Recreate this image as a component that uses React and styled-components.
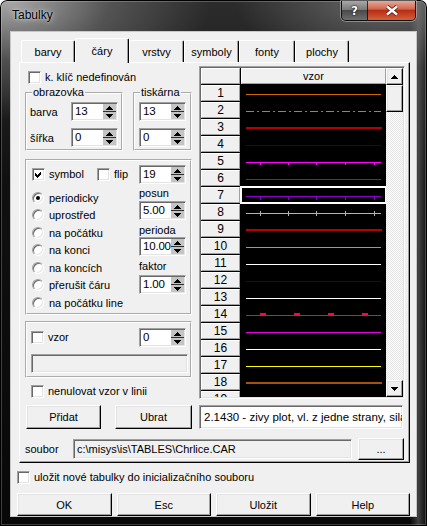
import React from "react";
import styled, { createGlobalStyle, css } from "styled-components";

const GlobalStyle = createGlobalStyle`
  html, body {
    margin: 0;
    padding: 0;
    background: #fff;
  }
  body {
    font-family: "Liberation Sans", Arial, sans-serif;
    font-size: 11px;
    color: #000;
  }
  * {
    box-sizing: border-box;
  }
`;

const raised = css`
  background: #f0f0f0;
  border: 1px solid;
  border-color: #fff #000 #000 #fff;
  box-shadow: inset -1px -1px 0 #a0a0a0, inset 1px 1px 0 #e3e3e3;
`;

const sunken = css`
  border: 1px solid;
  border-color: #a0a0a0 #fff #fff #a0a0a0;
  box-shadow: inset 1px 1px 0 #696969, inset -1px -1px 0 #e3e3e3;
`;

const TABS = [
  ["barvy", 54],
  ["čáry", 54],
  ["vrstvy", 55],
  ["symboly", 55],
  ["fonty", 56],
  ["plochy", 54],
];

const RADIOS = [
  "periodicky",
  "uprostřed",
  "na počátku",
  "na konci",
  "na koncích",
  "přerušit čáru",
  "na počátku line",
];

const TICKS = [19, 47, 75, 104, 133];

// one entry per row of the "vzor" column
const LINES = [
  { c: "#d06a00" },
  { c: "#c87a18", dash: "8 3 2 3" },
  { c: "#b40000", w: 2, x2: 141 },
  { c: "#0000b4" },
  { c: "#ff00ff", ticks: "short" },
  { c: "#a000a8" },
  { c: "#8800c8", ticks: "long" },
  { c: "#b4b4b4", ticks: "cross" },
  { c: "#b40000", w: 2, x2: 141 },
  { c: "#10d0d8" },
  { c: "#ffffff" },
  { c: "#0000b4" },
  { c: "#ffffff" },
  { c: "#ff0050", blocks: true },
  { c: "#e000e0" },
  { c: "#ffffff" },
  { c: "#ffff00" },
  { c: "#a85010", w: 2, x2: 141 },
  null,
];

const LineSample = ({ spec }) => {
  if (!spec) return null;
  const { c, w = 1, x2 = 140, dash, ticks, blocks } = spec;
  return (
    <svg width="145" height="16" shapeRendering="crispEdges">
      {dash ? (
        <line x1="5" x2={x2} y1="9.5" y2="9.5" stroke={c} strokeDasharray={dash} />
      ) : (
        <rect x="5" y={w === 2 ? 8 : 9} width={x2 - 5} height={w} fill={c} />
      )}
      {ticks &&
        TICKS.map((x) => (
          <rect
            key={x}
            x={x}
            y={ticks === "cross" ? 7 : 10}
            width="1"
            height={ticks === "cross" ? 5 : ticks === "long" ? 3 : 2}
            fill={c}
          />
        ))}
      {blocks &&
        [19, 53, 87, 121].map((x) => (
          <rect key={x} x={x} y="7" width="6" height="3" fill={c} />
        ))}
    </svg>
  );
};

const Arrow = ({ dir }) => (
  <svg width="7" height="4" shapeRendering="crispEdges">
    <polygon points={dir === "up" ? "0,4 3.5,0 7,4" : "0,0 3.5,4 7,0"} fill="#000" />
  </svg>
);

const SpinEdit = ({ value, w = 47 }) => (
  <SpinField $w={w}>
    <SpinValue>{value}</SpinValue>
    <SpinButtons>
      <SpinHalf>
        <Arrow dir="up" />
      </SpinHalf>
      <SpinHalf $lower>
        <Arrow dir="down" />
      </SpinHalf>
    </SpinButtons>
  </SpinField>
);

const Check = ({ label, checked }) => (
  <CheckItem>
    <CheckBox>
      {checked && (
        <svg width="9" height="9" viewBox="0 0 9 9" shapeRendering="crispEdges">
          <path d="M1 3 L3 5 L7 1 L7 4 L3 8 L1 6 Z" fill="#000" />
        </svg>
      )}
    </CheckBox>
    {label}
  </CheckItem>
);

const App = () => {
  return (
    <>
      <GlobalStyle />
      <Window>
        <TitleBar>
          <Caption>Tabulky</Caption>
          <CaptionButtons>
            <HelpButton>?</HelpButton>
            <CloseButton>
              <svg width="14" height="11" viewBox="0 0 14 11">
                <path d="M2 1.5 L12 9.5 M12 1.5 L2 9.5" stroke="#5a1408" strokeWidth="4" />
                <path d="M2 1.5 L12 9.5 M12 1.5 L2 9.5" stroke="#fff" strokeWidth="2.4" />
              </svg>
            </CloseButton>
          </CaptionButtons>
        </TitleBar>

        <Client>
          <TabStrip>
            {TABS.map(([name, w], i) => (
              <Tab key={name} $w={w} $active={i === 1}>
                {name}
              </Tab>
            ))}
          </TabStrip>

          <TabPage>
            <PageBody>
              <LeftColumn>
                <KeyRow>
                  <Check label="k. klíč nedefinován" />
                </KeyRow>

                <GroupsRow>
                  <Group $w={98}>
                    <GroupLegend>obrazovka</GroupLegend>
                    <FieldGrid $cols="41px 47px" $pl={3}>
                      <span>barva</span>
                      <SpinEdit value="13" />
                      <span>šířka</span>
                      <SpinEdit value="0" />
                    </FieldGrid>
                  </Group>
                  <Group $w={59}>
                    <GroupLegend>tiskárna</GroupLegend>
                    <FieldGrid $cols="47px" $pl={4}>
                      <SpinEdit value="13" />
                      <SpinEdit value="0" />
                    </FieldGrid>
                  </Group>
                </GroupsRow>

                <SymbolGroup>
                  <SymbolRow>
                    <CheckSlot>
                      <Check label="symbol" checked />
                    </CheckSlot>
                    <Check label="flip" />
                  </SymbolRow>
                  <SpinEdit value="19" />
                  <RadioList>
                    {RADIOS.map((r, i) => (
                      <RadioItem key={r}>
                        <Radio>{i === 0 && <RadioDot />}</Radio>
                        {r}
                      </RadioItem>
                    ))}
                  </RadioList>
                  <ParamStack>
                    <ParamLabel>posun</ParamLabel>
                    <SpinSlot $mt={1}>
                      <SpinEdit value="5.00" />
                    </SpinSlot>
                    <ParamLabel $mt={4}>perioda</ParamLabel>
                    <SpinEdit value="10.00" />
                    <ParamLabel $mt={4}>faktor</ParamLabel>
                    <SpinSlot $mt={2}>
                      <SpinEdit value="1.00" />
                    </SpinSlot>
                  </ParamStack>
                </SymbolGroup>

                <PatternGroup>
                  <PatternRow>
                    <Check label="vzor" />
                    <SpinEdit value="0" />
                  </PatternRow>
                  <DisabledField />
                </PatternGroup>

                <ResetRow>
                  <Check label="nenulovat vzor v linii" />
                </ResetRow>
              </LeftColumn>

              <LineGrid>
                <Table>
                  <FixedCell />
                  <HeadCell>vzor</HeadCell>
                  {LINES.map((spec, i) => (
                    <React.Fragment key={i}>
                      <FixedCell>{i + 1}</FixedCell>
                      <DataCell $active={i === 6}>
                        <LineSample spec={spec} />
                      </DataCell>
                    </React.Fragment>
                  ))}
                </Table>
                <ScrollBar>
                  <ScrollButton>
                    <Arrow dir="up" />
                  </ScrollButton>
                  <Thumb />
                  <Track />
                  <ScrollButton>
                    <Arrow dir="down" />
                  </ScrollButton>
                </ScrollBar>
              </LineGrid>
            </PageBody>

            <ActionRow>
              <Button $w={75}>Přidat</Button>
              <Button $w={77} $ml={14}>
                Ubrat
              </Button>
              <InfoField>2.1430 - zivy plot, vl. z jedne strany, sila</InfoField>
            </ActionRow>

            <FileRow>
              <FileLabel>soubor</FileLabel>
              <PathField>c:\misys\is\TABLES\Chrlice.CAR</PathField>
              <Button $w={46} $h={22} $ml={6}>
                ...
              </Button>
            </FileRow>
          </TabPage>

          <SaveRow>
            <Check label="uložit nové tabulky do inicializačního souboru" />
          </SaveRow>

          <DialogButtons>
            <Button $h={23}>OK</Button>
            <Button $h={23}>Esc</Button>
            <Button $h={23}>Uložit</Button>
            <Button $h={23}>Help</Button>
          </DialogButtons>
        </Client>
      </Window>
    </>
  );
};

export default App;

const Window = styled.div`
  width: 427px;
  height: 526px;
  display: flex;
  flex-direction: column;
  border-radius: 7px 7px 0 0;
  overflow: hidden;
  background:
    radial-gradient(ellipse 200px 120px at 10px 0px, rgba(175, 175, 175, 0.95), rgba(110, 110, 110, 0.6) 50%, rgba(60, 60, 60, 0) 100%),
    radial-gradient(ellipse 150px 70px at 385px 0px, rgba(130, 130, 130, 0.7), rgba(0, 0, 0, 0) 100%),
    linear-gradient(90deg, rgba(0, 0, 0, 0) 96%, rgba(120, 120, 120, 0.5) 98%, rgba(0, 0, 0, 0) 100%),
    linear-gradient(180deg, #2c2c2c 0%, #101010 35%, #080808 100%);
  box-shadow: inset 0 0 0 1px #000, inset 0 0 0 2px rgba(255, 255, 255, 0.22);
`;

const TitleBar = styled.div`
  height: 31px;
  flex: none;
  display: flex;
  align-items: flex-start;
  padding-left: 12px;
`;

const Caption = styled.div`
  padding-top: 8px;
  font-size: 12px;
  line-height: 15px;
  color: #000;
  text-shadow: 0 0 6px rgba(255, 255, 255, 0.8), 0 0 2px rgba(255, 255, 255, 0.6);
`;

const CaptionButtons = styled.div`
  margin-left: auto;
  margin-right: 11px;
  margin-top: 1px;
  height: 20px;
  display: flex;
  border-radius: 0 0 5px 5px;
  border: 1px solid rgba(0, 0, 0, 0.8);
  border-top: none;
  box-shadow: 0 0 0 1px rgba(255, 255, 255, 0.35);
  overflow: hidden;
`;

const HelpButton = styled.div`
  width: 26px;
  display: flex;
  align-items: center;
  justify-content: center;
  border-right: 1px solid rgba(0, 0, 0, 0.7);
  background: linear-gradient(180deg, #a8a8a8 0%, #7a7a7a 45%, #4a4a4a 50%, #6e6e6e 100%);
  color: #fff;
  font-family: "DejaVu Sans", sans-serif;
  font-weight: bold;
  font-size: 12px;
  text-shadow: 0 0 2px #000, 0 0 1px #000;
`;

const CloseButton = styled.div`
  width: 47px;
  display: flex;
  align-items: center;
  justify-content: center;
  background: linear-gradient(180deg, #e8a898 0%, #d06850 42%, #b82e14 50%, #d4603c 100%);
`;

const Client = styled.div`
  margin: 0 10px;
  height: 486px;
  border: 1px solid #c8c8c8;
  background: #f0f0f0;
  padding: 0 6px;
  display: flex;
  flex-direction: column;
`;

const TabStrip = styled.div`
  margin-top: 6px;
  height: 24px;
  flex: none;
  display: flex;
  align-items: flex-end;
  padding-left: 4px;
`;

const Tab = styled.div`
  width: ${(p) => p.$w}px;
  height: ${(p) => (p.$active ? 25 : 22)}px;
  margin-bottom: ${(p) => (p.$active ? -1 : 0)}px;
  position: relative;
  z-index: ${(p) => (p.$active ? 2 : 0)};
  display: flex;
  align-items: center;
  justify-content: center;
  background: #f0f0f0;
  border: 1px solid;
  border-color: #fff #000 transparent #fff;
  border-bottom: none;
  border-radius: 2px 2px 0 0;
  box-shadow: inset -1px 0 0 #a0a0a0;
  font-size: 11px;
`;

const TabPage = styled.div`
  position: relative;
  z-index: 1;
  margin-left: 2px;
  width: 391px;
  height: 401px;
  flex: none;
  border: 1px solid;
  border-color: #fff #000 #000 #fff;
  box-shadow: inset -1px -1px 0 #a0a0a0;
  padding: 3px 0 0 0;
  display: flex;
  flex-direction: column;
`;

const PageBody = styled.div`
  display: flex;
  gap: 7px;
  padding-left: 5px;
`;

const LeftColumn = styled.div`
  width: 167px;
  display: flex;
  flex-direction: column;
`;

const KeyRow = styled.div`
  margin-top: 5px;
  padding-left: 3px;
  height: 13px;
  display: flex;
  align-items: center;
`;

const CheckItem = styled.label`
  display: flex;
  align-items: center;
  gap: 4px;
  white-space: nowrap;
  line-height: 13px;
`;

const CheckBox = styled.span`
  width: 13px;
  height: 13px;
  flex: none;
  background: #fff;
  ${sunken};
  display: inline-flex;
  align-items: center;
  justify-content: center;
`;

const GroupsRow = styled.div`
  margin-top: 2px;
  display: flex;
  gap: 10px;
`;

const Group = styled.fieldset`
  width: ${(p) => p.$w}px;
  height: 65px;
  margin: 0;
  padding: 0;
  min-width: 0;
  border: 2px groove #fff;
`;

const GroupLegend = styled.legend`
  margin-left: 5px;
  padding: 0 1px;
  font-size: 11px;
  line-height: 13px;
`;

const FieldGrid = styled.div`
  display: grid;
  grid-template-columns: ${(p) => p.$cols};
  row-gap: 7px;
  align-items: center;
  padding: 3px 0 0 ${(p) => p.$pl}px;
`;

const SpinField = styled.div`
  width: ${(p) => p.$w}px;
  height: 19px;
  flex: none;
  display: flex;
  background: #fff;
  ${sunken};
  padding: 1px;
`;

const SpinValue = styled.div`
  flex: 1;
  min-width: 0;
  padding-left: 2px;
  font-size: 11.5px;
  line-height: 15px;
  letter-spacing: -0.2px;
  overflow: hidden;
  white-space: nowrap;
`;

const SpinButtons = styled.div`
  width: 13px;
  display: flex;
  flex-direction: column;
  background: #c4c4c4;
`;

const SpinHalf = styled.div`
  flex: 1;
  display: flex;
  align-items: center;
  justify-content: center;
  border-top: ${(p) => (p.$lower ? "1px solid #303030" : "none")};
`;

const SymbolGroup = styled.div`
  margin-top: 8px;
  height: 156px;
  border: 2px groove #fff;
  padding: 4px 4px 0 5px;
  display: grid;
  grid-template-columns: 1fr 47px;
  grid-template-rows: 19px auto;
  align-content: start;
`;

const SymbolRow = styled.div`
  display: flex;
  align-items: center;
`;

const CheckSlot = styled.div`
  width: 65px;
`;

const RadioList = styled.div`
  margin-top: 5px;
  display: flex;
  flex-direction: column;
`;

const RadioItem = styled.div`
  height: 17.5px;
  display: flex;
  align-items: center;
  gap: 5px;
  white-space: nowrap;
`;

const Radio = styled.span`
  width: 12px;
  height: 12px;
  flex: none;
  border-radius: 50%;
  background: #fff;
  border: 1px solid;
  border-color: #a0a0a0 #fff #fff #a0a0a0;
  box-shadow: inset 1px 1px 0 #696969, inset -1px -1px 0 #e3e3e3;
  display: inline-flex;
  align-items: center;
  justify-content: center;
`;

const RadioDot = styled.span`
  width: 4px;
  height: 4px;
  border-radius: 50%;
  background: #000;
`;

const ParamStack = styled.div`
  margin-top: 3px;
  display: flex;
  flex-direction: column;
`;

const ParamLabel = styled.div`
  margin-top: ${(p) => p.$mt || 0}px;
  line-height: 13px;
`;

const SpinSlot = styled.div`
  margin-top: ${(p) => p.$mt || 0}px;
`;

const PatternGroup = styled.div`
  margin-top: 6px;
  height: 57px;
  border: 2px groove #fff;
  padding: 5px 2px 0 4px;
  display: flex;
  flex-direction: column;
`;

const PatternRow = styled.div`
  display: flex;
  align-items: center;
  justify-content: space-between;
  padding-right: 2px;
`;

const DisabledField = styled.div`
  margin-top: 7px;
  height: 19px;
  background: #f0f0f0;
  ${sunken};
`;

const ResetRow = styled.div`
  margin-top: 7px;
  padding-left: 6px;
`;

const LineGrid = styled.div`
  width: 206px;
  height: 333px;
  ${sunken};
  padding: 1px;
  display: flex;
  background: #f0f0f0;
`;

const Table = styled.div`
  flex: 1;
  overflow: hidden;
  display: grid;
  grid-template-columns: 39px 145px;
  grid-auto-rows: 16px;
  gap: 1px;
  align-content: start;
  background: #000;
`;

const FixedCell = styled.div`
  background: #f0f0f0;
  border-top: 1px solid #fff;
  border-left: 1px solid #fff;
  border-right: 1px solid #a0a0a0;
  border-bottom: 1px solid #a0a0a0;
  display: flex;
  align-items: center;
  justify-content: center;
  font-size: 12px;
  line-height: 14px;
`;

const HeadCell = styled(FixedCell)`
  font-size: 11px;
`;

const DataCell = styled.div`
  background: #000;
  display: flex;
  outline: ${(p) => (p.$active ? "2px solid #fff" : "none")};
  outline-offset: -1px;
  position: relative;
  z-index: ${(p) => (p.$active ? 1 : 0)};
`;

const ScrollBar = styled.div`
  width: 17px;
  flex: none;
  display: flex;
  flex-direction: column;
`;

const ScrollButton = styled.div`
  height: 17px;
  flex: none;
  ${raised};
  display: flex;
  align-items: center;
  justify-content: center;
`;

const Thumb = styled.div`
  height: 27px;
  flex: none;
  ${raised};
`;

const Track = styled.div`
  flex: 1;
  background: repeating-conic-gradient(#ffffff 0 25%, #e4e4e4 0 50%) 0 0 / 2px 2px;
`;

const ActionRow = styled.div`
  margin-top: 6px;
  height: 24px;
  display: flex;
  padding-left: 6px;
`;

const Button = styled.div`
  width: ${(p) => (p.$w ? `${p.$w}px` : "auto")};
  height: ${(p) => p.$h || 24}px;
  margin-left: ${(p) => p.$ml || 0}px;
  flex: none;
  ${raised};
  display: flex;
  align-items: center;
  justify-content: center;
  font-size: 11px;
`;

const InfoField = styled.div`
  margin-left: 7px;
  width: 204px;
  height: 24px;
  background: #fff;
  ${sunken};
  padding-left: 4px;
  display: flex;
  align-items: center;
  font-size: 11.5px;
  white-space: nowrap;
  overflow: hidden;
`;

const FileRow = styled.div`
  margin-top: 9px;
  height: 22px;
  display: flex;
  align-items: center;
  padding-left: 5px;
`;

const FileLabel = styled.div`
  width: 48px;
`;

const PathField = styled.div`
  width: 279px;
  height: 20px;
  background: #f0f0f0;
  ${sunken};
  padding-left: 3px;
  display: flex;
  align-items: center;
  white-space: nowrap;
  overflow: hidden;
`;

const SaveRow = styled.div`
  margin-top: 8px;
  height: 13px;
  display: flex;
  align-items: center;
`;

const DialogButtons = styled.div`
  margin-top: 9px;
  display: grid;
  grid-template-columns: repeat(4, 1fr);
  gap: 5px;
`;
